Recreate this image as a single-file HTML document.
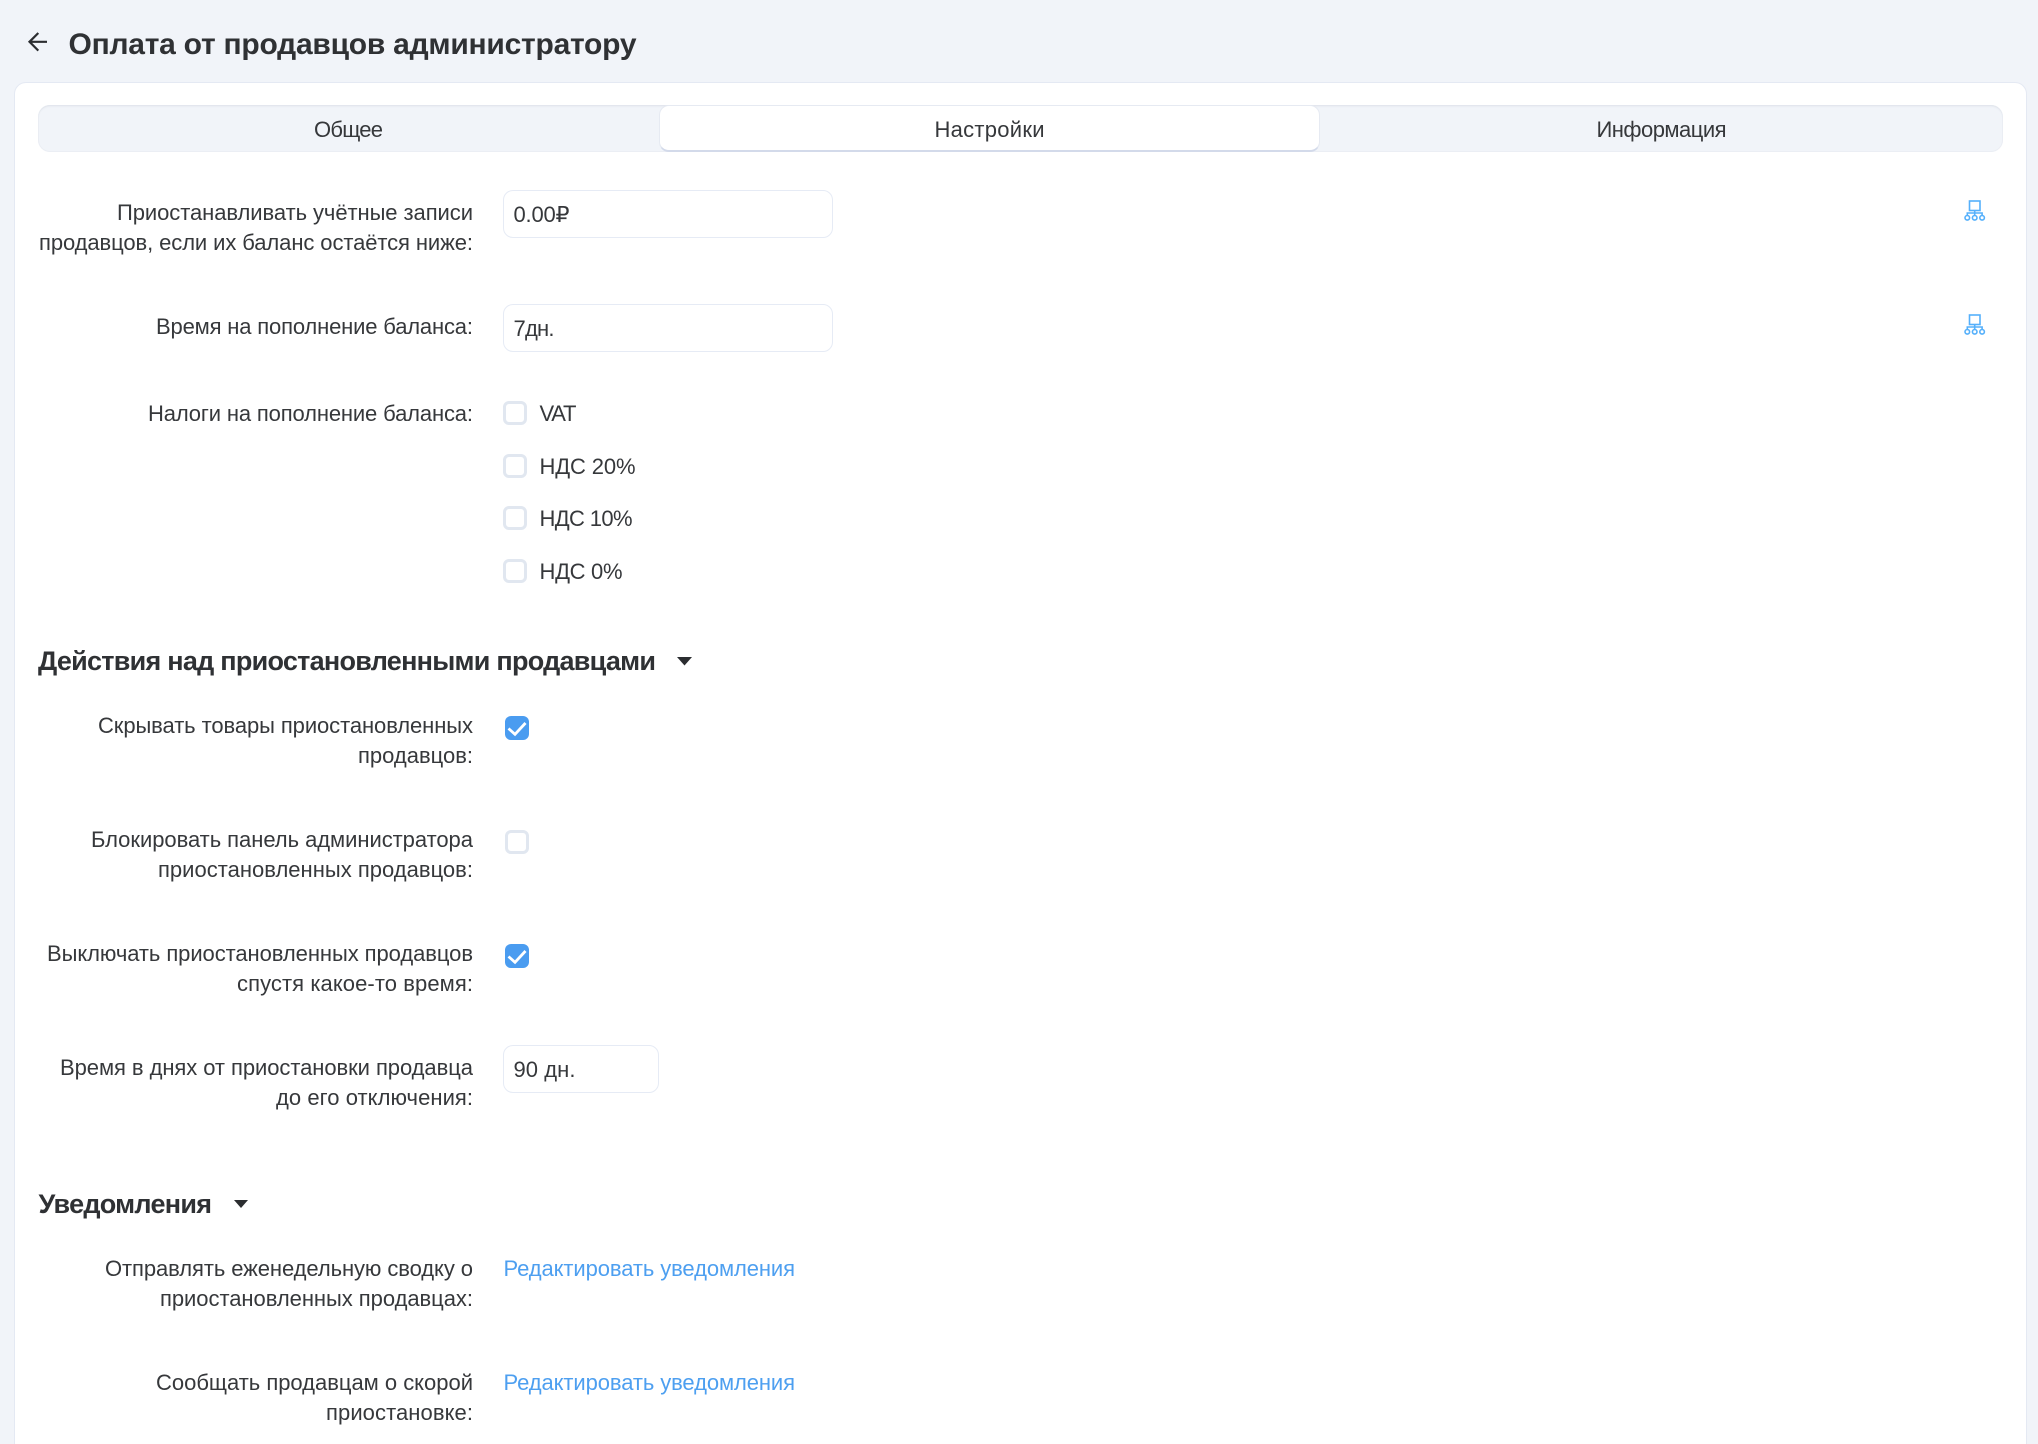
<!DOCTYPE html>
<html lang="ru"><head><meta charset="utf-8"><title>Оплата от продавцов администратору</title>
<style>
html,body{margin:0;padding:0;width:2038px;height:1444px;overflow:hidden;background:#f1f4f9}
.a{position:absolute;box-sizing:border-box}
#w{position:absolute;left:0;top:0;width:2038px;height:1444px;overflow:hidden}
.card{left:14px;top:82px;width:2013px;height:1400px;background:#fff;border:1.500px solid #e4e9f3;border-radius:12px}
.tabs{left:38px;top:105px;width:1965px;height:47px;background:#f1f4f9;border-radius:12px;box-shadow:inset 0 2px 2px -1px #dfe3ea,inset 0 0 0 1px #ebeef4}
.tab{left:659px;top:105px;width:661px;height:47px;background:#fff;border-radius:10px;border:1px solid #e6eaf2;border-bottom:2px solid #d3daea}
.inp{background:#fff;border:1.500px solid #e6ebf5;border-radius:10px}
.cb{width:24px;height:24px;border:3px solid #e1e7f0;border-radius:6px;background:#fff}
.cb.on{background:#4a9cf0;border:0}
.cb svg{display:block}
svg.t{position:absolute;left:0;top:0}
text{font-family:"Liberation Sans","Noto Sans CJK SC",sans-serif;font-size:22px;fill:#36383b}
text.r{text-anchor:end}
text.b{font-weight:bold;fill:#2f3134}
text.l{fill:#4d9ff0}
</style></head><body>
<div id="w">
<div class="a card"></div>
<div class="a tabs"></div>
<div class="a tab"></div>
<div class="a inp" style="left:503px;top:190px;width:330px;height:48px"></div>
<div class="a inp" style="left:503px;top:304px;width:330px;height:48px"></div>
<div class="a inp" style="left:503px;top:1045px;width:156px;height:48px"></div>
<div class="a cb" style="left:503px;top:401px"></div>
<div class="a cb" style="left:503px;top:454px"></div>
<div class="a cb" style="left:503px;top:506px"></div>
<div class="a cb" style="left:503px;top:559px"></div>
<div class="a cb on" style="left:505px;top:716px"><svg width="24" height="24" viewBox="0 0 24 24"><path d="M3.500 12.500l6.500 5.800L20.500 7" fill="none" stroke="#fff" stroke-width="2.800"/></svg></div>
<div class="a cb" style="left:505px;top:830px"></div>
<div class="a cb on" style="left:505px;top:944px"><svg width="24" height="24" viewBox="0 0 24 24"><path d="M3.500 12.500l6.500 5.800L20.500 7" fill="none" stroke="#fff" stroke-width="2.800"/></svg></div>
<svg class="t" width="2038" height="1444" viewBox="0 0 2038 1444">
<path d="M47 41.800H29.500M38.300 33l-8.800 8.800 8.800 8.800" fill="none" stroke="#2b2d30" stroke-width="2.200"/>
<g fill="none" stroke="#55b0fb" stroke-width="1.600">
<rect x="1969.500" y="201" width="10.500" height="9.500"/><path d="M1974.700 210.500V215.500M1967.300 215.500V213h14.800v2.500"/><circle cx="1967.300" cy="217.800" r="2.300"/><circle cx="1974.700" cy="217.800" r="2.300"/><circle cx="1982.100" cy="217.800" r="2.300"/>
<g transform="translate(0 114)"><rect x="1969.500" y="201" width="10.500" height="9.500"/><path d="M1974.700 210.500V215.500M1967.300 215.500V213h14.800v2.500"/><circle cx="1967.300" cy="217.800" r="2.300"/><circle cx="1974.700" cy="217.800" r="2.300"/><circle cx="1982.100" cy="217.800" r="2.300"/></g>
</g>
<path d="M677 657h15l-7.500 8.500z" fill="#2b2d30"/>
<path d="M234 1200h14l-7 8z" fill="#2b2d30"/>
<text class="b" x="68.500" y="54" style="font-size:30px" textLength="568">Оплата от продавцов администратору</text>
<text x="314" y="137" textLength="69">Общее</text>
<text x="934.500" y="137" textLength="110">Настройки</text>
<text x="1596.500" y="137" textLength="130">Информация</text>
<text class="r" x="473" y="220" textLength="356">Приостанавливать учётные записи</text>
<text class="r" x="473" y="250" textLength="434">продавцов, если их баланс остаётся ниже:</text>
<text class="r" x="473" y="334" textLength="317">Время на пополнение баланса:</text>
<text class="r" x="473" y="421" textLength="325">Налоги на пополнение баланса:</text>
<text class="r" x="473" y="733" textLength="375">Скрывать товары приостановленных</text>
<text class="r" x="473" y="763" textLength="115">продавцов:</text>
<text class="r" x="473" y="847" textLength="382">Блокировать панель администратора</text>
<text class="r" x="473" y="877" textLength="315">приостановленных продавцов:</text>
<text class="r" x="473" y="961" textLength="426">Выключать приостановленных продавцов</text>
<text class="r" x="473" y="991" textLength="236">спустя какое-то время:</text>
<text class="r" x="473" y="1075" textLength="413">Время в днях от приостановки продавца</text>
<text class="r" x="473" y="1105" textLength="197">до его отключения:</text>
<text class="r" x="473" y="1276" textLength="368">Отправлять еженедельную сводку о</text>
<text class="r" x="473" y="1306" textLength="313">приостановленных продавцах:</text>
<text class="r" x="473" y="1390" textLength="317">Сообщать продавцам о скорой</text>
<text class="r" x="473" y="1420" textLength="147">приостановке:</text>
<text x="513.500" y="222" textLength="56">0.00₽</text>
<text x="513.500" y="336" textLength="41">7дн.</text>
<text x="513.500" y="1077" textLength="62">90 дн.</text>
<text x="539.500" y="421" textLength="37">VAT</text>
<text x="539.500" y="474" textLength="96">НДС 20%</text>
<text x="539.500" y="526" textLength="93">НДС 10%</text>
<text x="539.500" y="579" textLength="83">НДС 0%</text>
<text class="b" x="38" y="670" style="font-size:27px" textLength="618">Действия над приостановленными продавцами</text>
<text class="b" x="38.500" y="1213" style="font-size:27px" textLength="173.500">Уведомления</text>
<text class="l" x="503.500" y="1276" textLength="291.500">Редактировать уведомления</text>
<text class="l" x="503.500" y="1390" textLength="291.500">Редактировать уведомления</text>
</svg>
</div>
</body></html>
